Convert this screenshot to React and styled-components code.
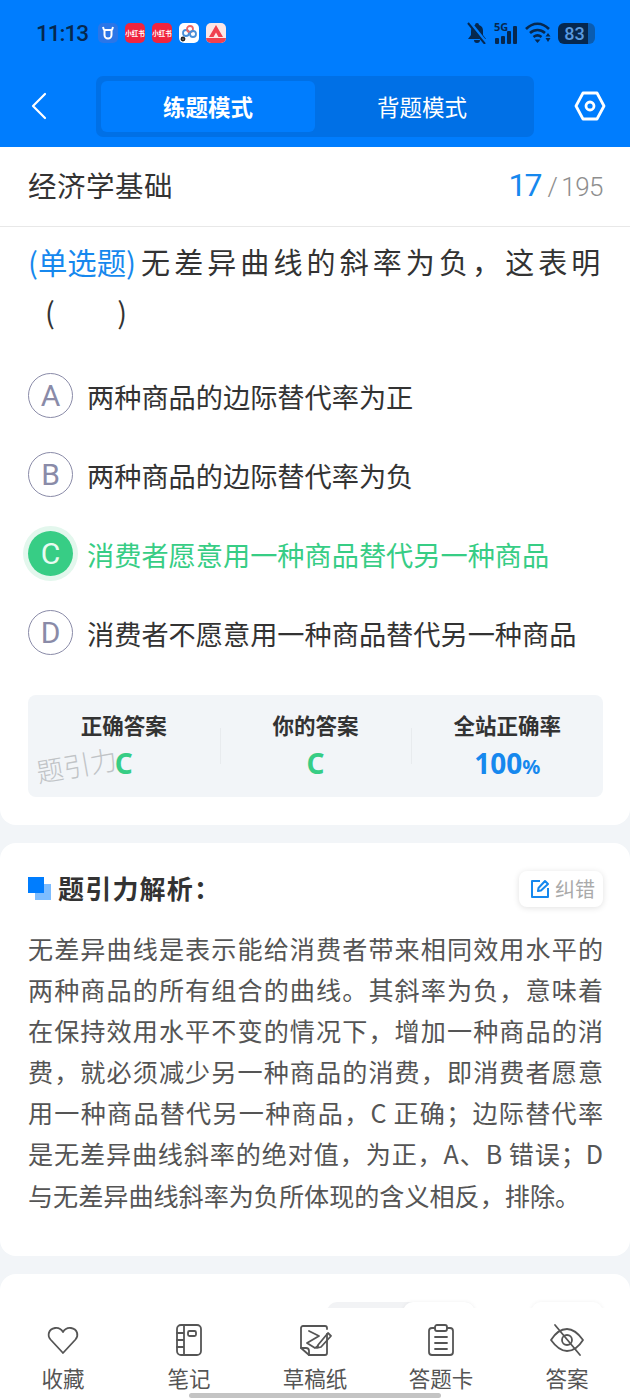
import React from "react";
import styled, { createGlobalStyle } from "styled-components";

const Global = createGlobalStyle`
  html, body { margin: 0; padding: 0; background: #f2f5f8; }
  * { box-sizing: border-box; }
  body { font-family: "Noto Sans CJK SC", "Noto Sans", sans-serif; }
`;
const Page = styled.div`
  position: relative; width: 630px; height: 1400px; overflow: hidden; background: #f2f5f8;
`;
const Header = styled.header`
  height: 147px; background: #007dfe; display: flex; flex-direction: column;
`;
const StatusBar = styled.div`
  height: 76px; display: flex; align-items: center; padding: 0 35px 10px 36px; justify-content: space-between;
`;
const StatusLeft = styled.div`display: flex; align-items: center; gap: 7px;`;
const Clock = styled.span`
  font: 500 22.500px/1 Roboto, sans-serif; letter-spacing: -1px; color: #06284f; margin-right: 3px; width: 52px; white-space: nowrap;
`;
const AppIcon = styled.span`
  width: 20px; height: 20px; border-radius: 5px; background: ${p => p.$bg};
  display: flex; align-items: center; justify-content: center; color: #fff;
  font-size: 6.500px; font-weight: 700; white-space: nowrap; overflow: hidden; position: relative;
`;
const StatusRight = styled.div`display: flex; align-items: center; gap: 6px;`;
const Signal = styled.span`
  position: relative; width: 25px; height: 23px; display: block;
`;
const FiveG = styled.span`
  position: absolute; left: 0; top: -1px; font: 700 11px/11px "Noto Sans", sans-serif; color: #06284f;
`;
const Battery = styled.span`
  width: 37px; height: 21px; border-radius: 6px;
  background: linear-gradient(90deg, #06284f 0 82%, #0a5cb0 82% 100%);
  color: #5a9be0; font: 500 18px/21px Roboto, sans-serif; text-align: center; padding-right: 4px;
`;
const NavBar = styled.div`
  flex: 1; display: flex; align-items: center; padding: 0 24px 5px 30px; justify-content: space-between;
  margin-top: -6px;
`;
const Switcher = styled.div`
  width: 438px; height: 61px; background: #0070e6; border-radius: 7px; padding: 5px; display: flex; margin-left: 8px;
`;
const ModeButton = styled.div`
  flex: 1; border-radius: 6px; background: ${p => p.$active ? "#007dfe" : "transparent"};
  color: #fff; font-size: 22.500px; font-weight: ${p => p.$active ? 700 : 400};
  display: flex; align-items: center; justify-content: center; line-height: 1;
`;
const TopSheet = styled.section`
  background: #fff; border-radius: 0 0 16px 16px; height: 678px; padding: 0 27px 0 28px;
`;
const SubjectRow = styled.div`
  height: 80px; margin: 0 -27px 0 -28px; padding: 0 27px 4px 28px; border-bottom: 1px solid #e8e8e8;
  display: flex; align-items: center; justify-content: space-between;
`;
const Subject = styled.span`font-size: 28.500px; color: #333; letter-spacing: .5px;`;
const Progress = styled.span`
  font-family: Roboto, sans-serif; font-weight: 300; color: #8e8e8e; font-size: 26px; letter-spacing: -.5px; display: flex; align-items: baseline; gap: 4px;
`;
const Current = styled.span`color: #1688ee; font-size: 32px; font-weight: 400; letter-spacing: -2px; margin-right: 3px;`;
const Question = styled.div`
  margin-top: 9px; font-size: 29px; line-height: 50px; color: #333; letter-spacing: 4.100px;
`;
const QuestionLine = styled.div`white-space: nowrap;`;
const QTag = styled.span`color: #1688ee; letter-spacing: 0; margin-right: 5px; font-size: 29.400px;`;
const Paren = styled.div`padding-left: 17px; letter-spacing: .4px; white-space: pre;`;
const Options = styled.div`display: flex; flex-direction: column; margin-top: 20px;`;
const Option = styled.div`
  height: 79px; display: flex; align-items: center; gap: 14px; font-size: 27.200px;
  color: ${p => p.$correct ? "#37cd85" : "#333"};
`;
const Bullet = styled.span`
  width: 45px; height: 45px; border-radius: 50%; flex: none;
  border: ${p => p.$correct ? "none" : "1.5px solid #8a8ba8"};
  background: ${p => p.$correct ? "#37cd85" : "#fff"};
  color: ${p => p.$correct ? "#e8fbf1" : "#8a8ba8"};
  box-shadow: ${p => p.$correct ? "0 0 0 5px #e3f7ed" : "none"};
  font: 400 30px/1 Roboto, sans-serif;
  display: flex; align-items: center; justify-content: center;
`;
const Stats = styled.div`
  position: relative; margin-top: 23px; height: 102px; background: #f2f5f8; border-radius: 8px; display: flex;
`;
const Stat = styled.div`
  flex: 1; display: flex; flex-direction: column; align-items: center; padding-top: 16px; gap: 7px;
  position: relative;
  & + &::before {
    content: ""; position: absolute; left: 0; top: 33px; height: 36px; width: 1px; background: #e8ebee;
  }
`;
const StatLabel = styled.span`font-size: 21.500px; line-height: 27px; font-weight: 700; color: #333;`;
const StatValue = styled.span`
  font: 700 28px/36px "Noto Sans", sans-serif; color: ${p => p.$c};
  small { font-size: 20px; }
`;
const Watermark = styled.span`
  position: absolute; left: 8px; top: 56px; font-size: 27px; line-height: 1; color: #c0c3c6;
  transform: rotate(-10deg); font-weight: 300; white-space: nowrap;
`;
const Card = styled.section`
  background: #fff; border-radius: 16px; margin-top: 18px; padding: 0 27px 0 28px;
  height: ${p => p.$h}px;
`;
const CardHead = styled.div`
  height: 88px; display: flex; align-items: center; justify-content: space-between;
`;
const CardTitle = styled.div`
  display: flex; align-items: center; gap: 7px; font-size: 26px; font-weight: 700; color: #333; letter-spacing: 1.200px;
`;
const Squares = styled.span`
  width: 23px; height: 23px; position: relative; display: block; margin-top: 2px;
  &::before { content: ""; position: absolute; right: 0; bottom: 0; width: 16px; height: 16px; background: #7dbdff; }
  &::after { content: ""; position: absolute; left: 0; top: 0; width: 16px; height: 16px; background: #007dfe; }
`;
const FixButton = styled.div`
  width: 84px; height: 36px; border-radius: 8px; background: #fff; box-shadow: 0 1px 6px rgba(0,0,0,.12);
  display: flex; align-items: center; justify-content: center; gap: 5px; color: #aaa; font-size: 20px; line-height: 1;
  margin-top: 4px; padding-left: 3px;
`;
const Analysis = styled.div`
  margin-top: -3px; font-size: 25.100px; line-height: 41.100px; color: #555;
`;
const AnalysisLine = styled.div`
  text-align: ${p => p.$last ? "left" : "justify"};
  text-align-last: ${p => p.$last ? "left" : "justify"};
  white-space: nowrap;
`;
const Third = styled.div`
  display: flex; justify-content: flex-end; gap: 38px; padding-top: 28px;
`;
const Pill = styled.div`
  height: 36px; border-radius: 10px; background: ${p => p.$bg}; width: ${p => p.$w}px; display: flex; justify-content: flex-end;
`;
const PillInner = styled.div`width: 72px; height: 36px; background: #fff; border-radius: 10px; box-shadow: 0 0 4px rgba(0,0,0,.06);`;
const TabBar = styled.nav`
  position: absolute; left: 0; right: 0; bottom: 0; height: 92px; background: #fff; display: flex;
  padding-top: 14px;
`;
const Tab = styled.div`
  flex: 1; display: flex; flex-direction: column; align-items: center; color: #555; font-size: 21.500px; line-height: 30px; gap: 5px;
`;
const TabIcon = styled.svg`width: 36px; height: 36px; display: block;`;
const HomeBar = styled.div`
  position: absolute; left: 189px; bottom: 2px; width: 252px; height: 5px; border-radius: 3px; background: #c4c4c4;
`;

const iconProps = { viewBox: "0 0 36 36", fill: "none", stroke: "#555", strokeWidth: 1.8, strokeLinecap: "round", strokeLinejoin: "round" };

const icons = {
  heart: <path d="M18 31 L5.5 17.5 C2 13.5 3.5 7 10 6 C13.5 5.5 16.5 7.500 18 10 C19.500 7.500 22.500 5.500 26 6 C32.500 7 34 13.500 30.500 17.500 Z" />,
  book: <g><rect x="6" y="3" width="24" height="30" rx="4" /><path d="M13 3 V33 M6 11 H13 M6 18 H13 M6 25 H13" /><rect x="17" y="9" width="8" height="5" rx="1.500" /></g>,
  draft: <g><path d="M30 12 V31 a2 2 0 0 1 -2 2 H12 L4 26 V6 a2 2 0 0 1 2 -2 H28 a2 2 0 0 1 2 2 V7" /><path d="M4 26 H9 a3 3 0 0 1 3 3 V33" /><path d="M12 9 L22 14 L10 21 L18 26 L21 24" /><path d="M21 23 L31 11 L34 14 L24 25 L20 26 Z" /></g>,
  card: <g><path d="M12 6 H9 a3 3 0 0 0 -3 3 V30 a3 3 0 0 0 3 3 H27 a3 3 0 0 0 3 -3 V9 a3 3 0 0 0 -3 -3 H24" /><rect x="12" y="3" width="12" height="6" rx="2" /><path d="M12 15 H24 M12 21 H24 M12 27 H24" /></g>,
  eye: <g><path d="M2 18 C7 10 12 7 18 7 C24 7 29 11 34 18 C29 26 24 29 18 29 C12 29 7 25 2 18 Z" /><circle cx="18" cy="18" r="5" /><path d="M6 3 L31 33" /></g>,
};

const tabs = [["heart", "收藏"], ["book", "笔记"], ["draft", "草稿纸"], ["card", "答题卡"], ["eye", "答案"]];
const options = [
  ["A", "两种商品的边际替代率为正"],
  ["B", "两种商品的边际替代率为负"],
  ["C", "消费者愿意用一种商品替代另一种商品", true],
  ["D", "消费者不愿意用一种商品替代另一种商品"],
];
const analysisLines = [
  "无差异曲线是表示能给消费者带来相同效用水平的",
  "两种商品的所有组合的曲线。其斜率为负，意味着",
  "在保持效用水平不变的情况下，增加一种商品的消",
  "费，就必须减少另一种商品的消费，即消费者愿意",
  "用一种商品替代另一种商品，C 正确；边际替代率",
  "是无差异曲线斜率的绝对值，为正，A、B 错误；D",
  "与无差异曲线斜率为负所体现的含义相反，排除。",
];

export default function App() {
  return (
    <Page>
      <Global />
      <Header>
        <StatusBar>
          <StatusLeft>
            <Clock>11:13</Clock>
            <AppIcon $bg="#2a76e8">
              <svg width="14" height="14" viewBox="0 0 14 14" fill="none" stroke="#fff" strokeWidth="2"><path d="M2 1 L3 4 M12 1 L11 4 M3.500 4 V9 a3.500 3.500 0 0 0 7 0 V4 Z" /></svg>
            </AppIcon>
            <AppIcon $bg="#f0243f">小红书</AppIcon>
            <AppIcon $bg="#f0243f">小红书</AppIcon>
            <AppIcon $bg="#fff">
              <svg width="18" height="18" viewBox="0 0 18 18" fill="none" strokeWidth="1.800"><circle cx="6" cy="9" r="3" stroke="#4a90d9" /><circle cx="10" cy="5" r="3" stroke="#e66" /><circle cx="13" cy="10" r="3" stroke="#4a90d9" /><circle cx="3" cy="15" r="1.500" stroke="#222" /></svg>
            </AppIcon>
            <AppIcon $bg="#fbe6e6">
              <svg width="20" height="20" viewBox="0 0 20 20"><path d="M10 2 L17 14 H12.500 L10 9.500 L7.500 14 H3 Z" fill="#f0404f" /><rect x="0" y="15" width="20" height="5" fill="#f0404f" /></svg>
            </AppIcon>
          </StatusLeft>
          <StatusRight>
            <svg width="22" height="22" viewBox="0 0 22 22" fill="#06284f"><path d="M11 1 a2 2 0 0 1 2 2 C16 4 17 6 17 9 V13 L20 17 H2 L5 13 V9 C5 6 6 4 9 3 a2 2 0 0 1 2 -2 Z M8 18 H14 a3 3 0 0 1 -6 0 Z" /><path d="M3 0 L20 21" stroke="#007dfe" strokeWidth="4" /><path d="M2 1 L19 22" stroke="#06284f" strokeWidth="2" /></svg>
            <Signal>
              <FiveG>5G</FiveG>
              <svg width="25" height="23" viewBox="0 0 25 23" fill="#06284f"><rect x="1" y="16" width="4" height="6" rx="1" /><rect x="7" y="14" width="4" height="8" rx="1" /><rect x="13" y="9" width="4" height="13" rx="1" /><rect x="19" y="4" width="4" height="18" rx="1" /></svg>
            </Signal>
            <svg width="27" height="22" viewBox="0 0 27 22" fill="none" stroke="#06284f" strokeWidth="2.600"><path d="M1 7 C8 0 17 0 24 7" /><path d="M5 11 C9.500 7 15.500 7 20 11" /><path d="M8.500 15 C11 13 14 13 16.500 15" /><path d="M12.500 21 L9.500 17.500 H15.500 Z" fill="#06284f" stroke="none" /><path d="M23 11 L20.500 14.500 H25.500 Z M23 20 L20.500 16 H25.500 Z" fill="#06284f" stroke="none" /></svg>
            <Battery>83</Battery>
          </StatusRight>
        </StatusBar>
        <NavBar>
          <svg width="18" height="30" viewBox="0 0 18 30" fill="none" stroke="#fff" strokeWidth="2.200" strokeLinecap="round" strokeLinejoin="round"><path d="M15 3 L3 15 L15 27" /></svg>
          <Switcher>
            <ModeButton $active>练题模式</ModeButton>
            <ModeButton>背题模式</ModeButton>
          </Switcher>
          <svg width="32" height="30" viewBox="0 0 32 30" fill="none" stroke="#fff" strokeWidth="2.800" strokeLinejoin="round"><path d="M9 2 H23 L30 15 L23 28 H9 L2 15 Z" /><circle cx="16" cy="15" r="4" /></svg>
        </NavBar>
      </Header>
      <TopSheet>
        <SubjectRow>
          <Subject>经济学基础</Subject>
          <Progress><Current>17</Current><span>/</span><span>195</span></Progress>
        </SubjectRow>
        <Question>
          <QuestionLine><QTag>(单选题)</QTag>无差异曲线的斜率为负，这表明</QuestionLine>
          <Paren>{"(         )"}</Paren>
        </Question>
        <Options>
          {options.map(([k, t, c]) => (
            <Option key={k} $correct={c}><Bullet $correct={c}>{k}</Bullet>{t}</Option>
          ))}
        </Options>
        <Stats>
          <Stat><StatLabel>正确答案</StatLabel><StatValue $c="#37cd85">C</StatValue></Stat>
          <Stat><StatLabel>你的答案</StatLabel><StatValue $c="#37cd85">C</StatValue></Stat>
          <Stat><StatLabel>全站正确率</StatLabel><StatValue $c="#1688ee">100<small>%</small></StatValue></Stat>
          <Watermark>题引力</Watermark>
        </Stats>
      </TopSheet>
      <Card $h={413}>
        <CardHead>
          <CardTitle><Squares />题引力解析：</CardTitle>
          <FixButton>
            <svg width="20" height="20" viewBox="0 0 20 20" fill="none" stroke="#1688ee" strokeWidth="2" strokeLinejoin="round"><path d="M10 2 H2 V18 H18 V9" /><path d="M8 12 L8.500 9 L15 2 L18 5 L11 11.500 Z" /></svg>
            纠错
          </FixButton>
        </CardHead>
        <Analysis>
          {analysisLines.map((l, i) => (
            <AnalysisLine key={i} $last={i === analysisLines.length - 1}>{l}</AnalysisLine>
          ))}
        </Analysis>
      </Card>
      <Card $h={200}>
        <Third>
          <Pill $bg="#f2f3f5" $w={148}><PillInner /></Pill>
          <Pill $bg="#fff" $w={90}><PillInner /></Pill>
        </Third>
      </Card>
      <TabBar>
        {tabs.map(([i, l]) => (
          <Tab key={i}><TabIcon {...iconProps}>{icons[i]}</TabIcon>{l}</Tab>
        ))}
      </TabBar>
      <HomeBar />
    </Page>
  );
}
